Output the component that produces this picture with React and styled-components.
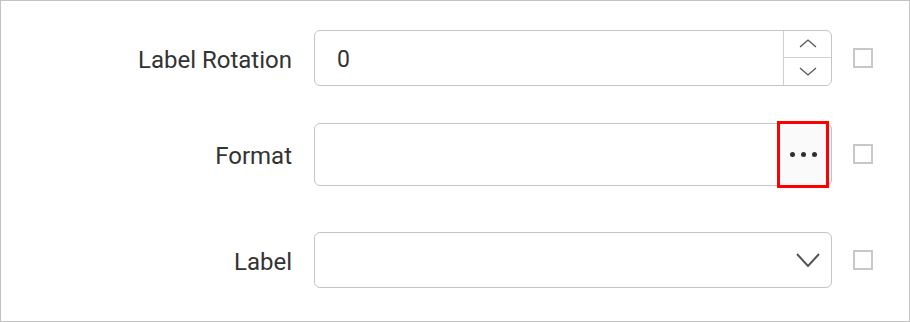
import styled, { createGlobalStyle } from 'styled-components';

const GlobalStyle = createGlobalStyle`
  html, body {
    margin: 0;
    padding: 0;
    background: #ffffff;
  }
  body {
    font-family: Roboto, "Liberation Sans", sans-serif;
  }
`;

const Frame = styled.div`
  width: 910px;
  height: 322px;
  box-sizing: border-box;
  border: 1px solid #c2c2c2;
  background: #ffffff;
  padding-top: 28px;
`;

const Row = styled.div`
  display: grid;
  grid-template-columns: 291px 518px 20px;
  column-gap: 22px;
  align-items: center;
  height: ${(props) => props.height}px;
  margin-top: ${(props) => props.offset || 0}px;
`;

const Label = styled.div`
  text-align: right;
  font-size: 24px;
  color: #333333;
  padding-top: 4px;
`;

const Field = styled.div`
  display: flex;
  align-items: stretch;
  height: ${(props) => props.height}px;
  box-sizing: border-box;
  border: 1px solid #c4c4c4;
  border-radius: 6px;
  background: #ffffff;
  position: relative;
`;

const Value = styled.div`
  flex: 1;
  display: flex;
  align-items: center;
  padding-left: 22px;
  padding-top: 3px;
  font-size: 23px;
  color: #333333;
`;

const Spinner = styled.div`
  width: 47px;
  display: flex;
  flex-direction: column;
  border-left: 1px solid #cfcfcf;
`;

const SpinButton = styled.div`
  flex: 1;
  display: flex;
  align-items: center;
  justify-content: center;
  & + & {
    border-top: 1px solid #cfcfcf;
  }
`;

const EllipsisButton = styled.div`
  position: absolute;
  right: 2px;
  top: -3px;
  bottom: -3px;
  width: 52px;
  box-sizing: border-box;
  border: 3px solid #ff0000;
  background: #fafafa;
  display: flex;
  align-items: center;
  justify-content: center;
  gap: 6px;
`;

const Dot = styled.span`
  width: 5px;
  height: 5px;
  border-radius: 50%;
  background: #2f2f2f;
`;

const DropIcon = styled.div`
  position: absolute;
  right: 11px;
  top: 0;
  bottom: 0;
  display: flex;
  align-items: center;
`;

const Check = styled.div`
  width: 20px;
  height: 20px;
  box-sizing: border-box;
  border: 2px solid #c8c8c8;
  background: #ffffff;
  margin-left: -1px;
`;

const Chevron = ({ up, width, height, stroke = 1.3 }) => (
  <svg width={width} height={height} viewBox={`0 0 ${width} ${height}`}>
    <polyline
      points={
        up
          ? `1,${height - 1} ${width / 2},1 ${width - 1},${height - 1}`
          : `1,1 ${width / 2},${height - 1} ${width - 1},1`
      }
      fill="none"
      stroke="#555555"
      strokeWidth={stroke}
    />
  </svg>
);

const App = () => {
  return (
    <>
      <GlobalStyle />
      <Frame>
        <Row height={57}>
          <Label>Label Rotation</Label>
          <Field height={56}>
            <Value>0</Value>
            <Spinner>
              <SpinButton>
                <Chevron up width={18} height={9} />
              </SpinButton>
              <SpinButton>
                <Chevron width={18} height={9} />
              </SpinButton>
            </Spinner>
          </Field>
          <Check />
        </Row>
        <Row height={64} offset={36}>
          <Label>Format</Label>
          <Field height={63}>
            <Value />
            <EllipsisButton>
              <Dot />
              <Dot />
              <Dot />
            </EllipsisButton>
          </Field>
          <Check />
        </Row>
        <Row height={56} offset={46}>
          <Label>Label</Label>
          <Field height={56}>
            <Value />
            <DropIcon>
              <Chevron width={24} height={14} stroke={2} />
            </DropIcon>
          </Field>
          <Check />
        </Row>
      </Frame>
    </>
  );
};

export default App;
